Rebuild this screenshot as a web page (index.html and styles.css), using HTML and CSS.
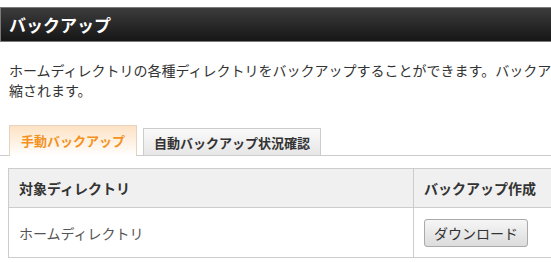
FILE: index.html
```
<html>
<head>
    <meta charset="utf-8">
    <link rel="stylesheet" href="styles.css">
</head>
<body>
    <div class="wrap">
        <h1 class="page-title">バックアップ</h1>

        <p class="lead">ホームディレクトリの各種ディレクトリをバックアップすることができます。バックアップしたファイルは自動的に圧縮されます。</p>

        <ul class="tabs">
            <li class="tab active">手動バックアップ</li>
            <li class="tab">自動バックアップ状況確認</li>
        </ul>

        <table class="backup-table">
            <tr>
                <th class="col-dir">対象ディレクトリ</th>
                <th>バックアップ作成</th>
            </tr>
            <tr>
                <td>ホームディレクトリ</td>
                <td><button class="btn">ダウンロード</button></td>
            </tr>
        </table>
    </div>
</body>
</html>
```

FILE: styles.css
```
html, body {
    overflow: hidden;
}

body {
    margin: 0;
    background-color: #fff;
    color: #333;
    font-family: "Noto Sans CJK JP", "Noto Sans", sans-serif;
}

.wrap {
    width: 760px;
}

.page-title {
    margin: 7px 0 0 0;
    height: 33px;
    padding-left: 8px;
    border: 1px solid #7a7a7a;
    border-right: none;
    background: linear-gradient(#3c3c3c, #161616);
    color: #fff;
    font-size: 17px;
    font-weight: bold;
    line-height: 33px;
}

.lead {
    margin: 18px 9px 0 9px;
    font-size: 14px;
    line-height: 20px;
    color: #333;
}

.tabs {
    list-style: none;
    margin: 25px 0 0 0;
    padding: 0 0 0 9px;
    display: flex;
    align-items: flex-end;
    gap: 6px;
    border-bottom: 1px solid #ccc;
}

.tab {
    height: 26px;
    padding: 0 10px;
    border: 1px solid #ccc;
    border-bottom: none;
    background: linear-gradient(#fafafa, #e6e6e6);
    color: #333;
    font-size: 13px;
    font-weight: bold;
    line-height: 27px;
}

.tab.active {
    height: 30px;
    padding: 0 11px;
    margin-bottom: -1px;
    border-color: #e6d3bd;
    background: linear-gradient(#fde2c4, #fff);
    color: #f4921f;
    line-height: 30px;
}

.backup-table {
    margin: 12px 0 0 8px;
    width: 752px;
    border-collapse: collapse;
    font-size: 14px;
}

.backup-table th,
.backup-table td {
    border: 1px solid #ccc;
    padding: 0 10px;
    text-align: left;
}

.backup-table th {
    height: 39px;
    background-color: #f0f0f0;
    color: #333;
    font-weight: bold;
}

.backup-table td {
    height: 50px;
    color: #555;
}

.col-dir {
    width: 384px;
}

.btn {
    height: 28px;
    padding: 0 9px;
    border: 1px solid #aaa;
    border-radius: 3px;
    background: linear-gradient(#f6f6f6, #dcdcdc);
    color: #333;
    font-family: "Noto Sans CJK JP", sans-serif;
    font-size: 14px;
}
```
